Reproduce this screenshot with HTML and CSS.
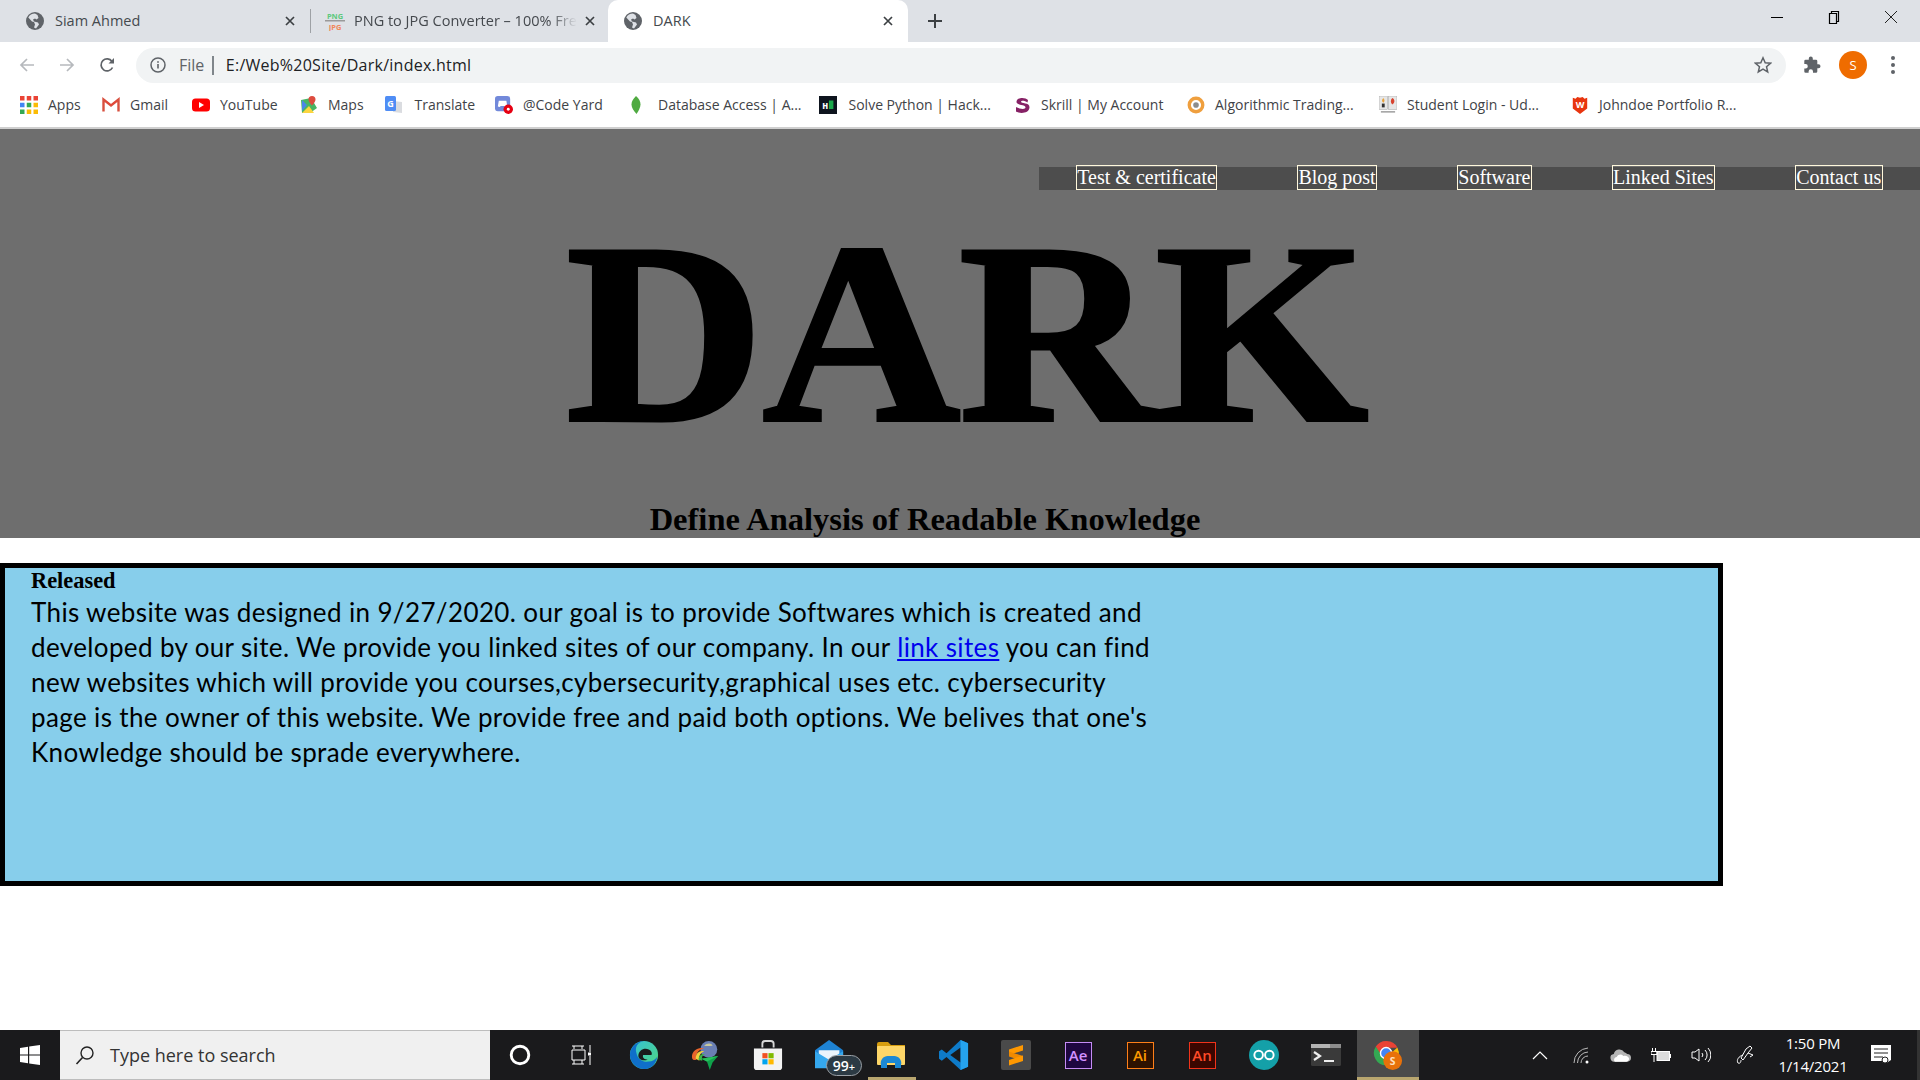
FILE: index.html
```html
<!DOCTYPE html>
<html lang="en">
<head>
<meta charset="utf-8">
<title>DARK</title>
<link rel="stylesheet" href="styles.css">
</head>
<body>
<svg class="defs" width="0" height="0"><defs>
<symbol id="globe" viewBox="0 0 18 18"><circle cx="9" cy="9" r="9" fill="#5f6368"/><path d="M9 1.5C6 1.5 3.500 3 2.300 5.500L6 9.500l2 .5 1 2.500-1 3 2 1 3-4-1-2-4-1-1-2 2-1 1.500 1 2-1.500-1-3z" fill="#dee1e6"/></symbol>
</defs></svg>
<div class="chrome">
  <div class="tabstrip">
    <div class="tab tab-a">
      <svg class="fav"><use href="#globe"/></svg>
      <span class="tab-title">Siam Ahmed</span>
      <svg class="close" viewBox="0 0 10 10"><path d="M1 1l8 8M9 1l-8 8"/></svg>
    </div>
    <div class="tab tab-b">
      <svg class="fav-png" viewBox="0 0 20 20"><text x="10" y="7.500" class="png">PNG</text><rect x="0" y="9" width="20" height="1.500" fill="#9a9a9a"/><text x="10" y="18.500" class="jpg">JPG</text></svg>
      <span class="tab-title fade">PNG to JPG Converter – 100% Free</span>
      <svg class="close" viewBox="0 0 10 10"><path d="M1 1l8 8M9 1l-8 8"/></svg>
    </div>
    <div class="tab tab-c">
      <svg class="fav"><use href="#globe"/></svg>
      <span class="tab-title">DARK</span>
      <svg class="close" viewBox="0 0 10 10"><path d="M1 1l8 8M9 1l-8 8"/></svg>
    </div>
    <svg class="newtab" viewBox="0 0 14 14"><path d="M7 0v14M0 7h14"/></svg>
    <div class="winctl">
      <svg viewBox="0 0 14 14"><path d="M1 7.500h12" stroke="#000"/></svg>
      <svg viewBox="0 0 14 14"><path d="M2.500 3.500h7v10h-7zM4.500 3.500V1.500h7v10h-2" fill="none" stroke="#000" stroke-width="1.200"/></svg>
      <svg viewBox="0 0 14 14"><path d="M1 1l12 12M13 1L1 13" stroke="#222"/></svg>
    </div>
  </div>
  <div class="toolbar">
    <svg class="nav-ic dim" viewBox="0 0 16 16"><path d="M15 8H2M8 2L2 8l6 6"/></svg>
    <svg class="nav-ic dim" viewBox="0 0 16 16"><path d="M1 8h13M8 2l6 6-6 6"/></svg>
    <svg class="nav-ic" viewBox="0 0 16 16"><path d="M13.500 10.500A6 6 0 1 1 13 4.500"/><path class="solid" d="M15 1v5.500H9.500z"/></svg>
    <div class="omni">
      <svg class="info" viewBox="0 0 16 16"><circle cx="8" cy="8" r="7" fill="none" stroke="#5f6368" stroke-width="1.500"/><rect x="7.200" y="7" width="1.600" height="4.500" fill="#5f6368"/><rect x="7.200" y="4.200" width="1.600" height="1.600" fill="#5f6368"/></svg>
      <span class="scheme">File</span>
      <span class="sep"></span>
      <span class="url">E:/Web%20Site/Dark/index.html</span>
      <svg class="star" viewBox="0 0 18 18"><path d="M9 1.800l2.200 4.900 5.300.5-4 3.500 1.200 5.200L9 13.200l-4.700 2.700 1.200-5.200-4-3.500 5.300-.5z"/></svg>
    </div>
    <svg class="puzzle" viewBox="0 0 18 18"><path fill="#5f6368" d="M15.500 8.200h-1.200V5a1.300 1.300 0 0 0-1.300-1.300H9.800V2.500a2 2 0 0 0-4 0v1.200H2.600A1.300 1.300 0 0 0 1.300 5v3h1.300a2.200 2.200 0 0 1 0 4.400H1.300v3a1.300 1.300 0 0 0 1.300 1.300h3v-1.300a2.200 2.200 0 0 1 4.400 0v1.300h3a1.300 1.300 0 0 0 1.300-1.300v-3.200h1.200a2 2 0 0 0 0-4z"/></svg>
    <span class="avatar">S</span>
    <span class="dots"><i></i><i></i><i></i></span>
  </div>
  <div class="bookmarks">
    <a class="bm"><svg class="bi" viewBox="0 0 16 16"><g><rect x="0" y="0" width="4" height="4" fill="#ea4335"/><rect x="6" y="0" width="4" height="4" fill="#ea4335"/><rect x="12" y="0" width="4" height="4" fill="#ea4335"/><rect x="0" y="6" width="4" height="4" fill="#4285f4"/><rect x="6" y="6" width="4" height="4" fill="#34a853"/><rect x="12" y="6" width="4" height="4" fill="#fbbc05"/><rect x="0" y="12" width="4" height="4" fill="#34a853"/><rect x="6" y="12" width="4" height="4" fill="#fbbc05"/><rect x="12" y="12" width="4" height="4" fill="#fbbc05"/></g></svg>Apps</a>
    <a class="bm"><svg class="bi" viewBox="0 0 18 16"><path d="M1.500 14.500V2.500L9 8.500l7.500-6v12" fill="none" stroke="#d8503f" stroke-width="2.400"/><path d="M3 3.500L9 8l6-4.500" fill="none" stroke="#ea4335" stroke-width="1"/></svg>Gmail</a>
    <a class="bm"><svg class="bi" viewBox="0 0 18 16"><rect x="0" y="1.500" width="18" height="13" rx="3.500" fill="#f00"/><path d="M7 5l5 3-5 3z" fill="#fff"/></svg>YouTube</a>
    <a class="bm"><svg class="bi" viewBox="0 0 18 18"><path d="M1 4l10-2 6 10-7 5-8 0z" fill="#48b564"/><path d="M2 17l7-7 5 7z" fill="#fcd53f"/><path d="M2 4l5 5-5 6z" fill="#4a86e8"/><path d="M12 0a3.500 3.500 0 0 1 3.500 3.500c0 2.500-3.500 6-3.500 6s-3.500-3.500-3.500-6A3.500 3.500 0 0 1 12 0z" fill="#dd4b3e"/></svg>Maps</a>
    <a class="bm bm-wide"><svg class="bi" viewBox="0 0 18 18"><path d="M8 5l9 1v11l-9-1z" fill="#dadce0"/><rect x="0" y="0" width="11" height="15" rx="1.500" fill="#4f8df5"/><text x="5.500" y="11" class="tg">G</text></svg>Translate</a>
    <a class="bm"><svg class="bi" viewBox="0 0 19 19"><rect x="0" y="0" width="16" height="16" rx="3" fill="#7289da"/><path d="M4 5h8l1 6-2 .5-1-1H6l-1 1-2-.5z" fill="#fff"/><circle cx="14" cy="14" r="5" fill="#e60012"/><circle cx="14" cy="14" r="1.500" fill="#fff"/></svg>@Code Yard</a>
    <a class="bm"><svg class="bi" viewBox="0 0 16 18"><path d="M5 0c3 2.500 4.500 5.500 4.500 8.500S7.500 15 5.500 18C3 15 .5 12 .5 8.500S2.500 2.500 5 0z" fill="#4faa41"/></svg>Database Access | A...</a>
    <a class="bm bm-wide"><svg class="bi" viewBox="0 0 20 20"><rect width="20" height="20" fill="#0e141e"/><text x="7" y="14" class="hr">H</text><rect x="11" y="5" width="5" height="9.500" fill="#1ba94c"/></svg>Solve Python | Hack...</a>
    <a class="bm"><svg class="bi" viewBox="0 0 15 18"><path d="M13.500 4C11 1 2.500 1 2 5.500c-.3 4.500 9.500 2.500 9 6 0 2-5 2-9.500-.5V15.500c4 2.500 13 2 13.500-4 .5-5.500-9-3.500-8.500-6 .5-1.500 4-1 6.500 1z" fill="#862165"/></svg>Skrill | My Account</a>
    <a class="bm"><svg class="bi" viewBox="0 0 16 16"><circle cx="8" cy="8" r="6" fill="none" stroke="#ef9f3e" stroke-width="3"/><circle cx="8" cy="8" r="2.500" fill="#8d8d8d"/></svg>Algorithmic Trading...</a>
    <a class="bm"><svg class="bi" viewBox="0 0 19 19"><rect x="0" y="0" width="9" height="14" fill="#e6e6e6" stroke="#999" stroke-width=".5"/><rect x="10" y="0" width="9" height="14" fill="#e6e6e6" stroke="#999" stroke-width=".5"/><path d="M4.500 2c2 2 1.500 4 0 5-1.500-1-2-3 0-5z" fill="#e9a23b"/><path d="M14 2c3 1.500 3 5 0 7-2-2-2-5 0-7z" fill="#d8432f"/><rect x="3" y="8" width="3" height="4" fill="#333"/><rect x="2" y="16" width="15" height="1.500" fill="#999"/></svg>Student Login - Ud...</a>
    <a class="bm"><svg class="bi" viewBox="0 0 18 20"><path d="M1 2l3 1 2-2 3 1 3-1 2 2 3-1v12l-8 6-8-6z" fill="#e8350f"/><text x="9" y="13.500" class="wm">W</text></svg>Johndoe Portfolio R...</a>
  </div>
</div>

<main class="page">
  <header class="hero">
    <nav class="topnav">
      <a class="navlink">Test &amp; certificate</a>
      <a class="navlink">Blog post</a>
      <a class="navlink">Software</a>
      <a class="navlink">Linked Sites</a>
      <a class="navlink">Contact us</a>
    </nav>
    <h1 class="title">DARK</h1>
    <h2 class="subtitle">Define Analysis of Readable Knowledge</h2>
  </header>
  <section class="released">
    <h3 class="rel-head">Released</h3>
    <p class="rel-text">This website was designed in 9/27/2020. our goal is to provide Softwares which is created and<br>developed by our site. We provide you linked sites of our company. In our <a class="inlink" href="#">link sites</a> you can find<br>new websites which will provide you courses,cybersecurity,graphical uses etc. cybersecurity<br>page is the owner of this website. We provide free and paid both options. We belives that one's<br>Knowledge should be sprade everywhere.</p>
  </section>
</main>

<footer class="taskbar">
  <div class="start"><svg viewBox="0 0 20 20"><path fill="#fff" d="M0 3l8-1.200V9.500H0zM9.200 1.600L20 0v9.500H9.200zM0 10.500h8v7.700L0 17zM9.200 10.500H20V20L9.200 18.400z"/></svg></div>
  <div class="search">
    <svg viewBox="0 0 20 20"><circle cx="12" cy="8" r="6" fill="none" stroke="#222" stroke-width="1.400"/><path d="M7.500 12.500L1.500 19" stroke="#222" stroke-width="1.600"/></svg>
    <span>Type here to search</span>
  </div>
  <div class="apps">
    <span class="slot"><svg class="ti" viewBox="0 0 20 20"><circle cx="10" cy="10" r="8" fill="none" stroke="#fff" stroke-width="2.600"/></svg></span>
    <span class="slot"><svg class="ti" viewBox="0 0 22 20"><path d="M1 1h12M1 19h12M3 1v3M11 1v3M1 5h13v10H1zM3 15v4M11 15v4M19 0v7M19 11v9" fill="none" stroke="#fff" stroke-width="1"/><rect x="17" y="7.500" width="3" height="3" fill="#fff"/></svg></span>
    <span class="slot"><svg class="ta" viewBox="0 0 32 32"><defs><linearGradient id="eg" x1="0" y1="0" x2="1" y2="1"><stop offset="0" stop-color="#35c1d8"/><stop offset="1" stop-color="#4fd67f"/></linearGradient></defs><circle cx="16" cy="16" r="15" fill="url(#eg)"/><path d="M1 16C1 8 8 1 16 1c-7 1-10 7-8 13 1 6 7 10 13 9 4-.5 7-2 9-5-1 8-7 13-14 13C8 31 1 24 1 16z" fill="#0f6fc9"/><path d="M10 17c0-6 6-9 11-7 3 1 4 4 3 6H15c-1 3 2 5 5 5-6 2-10-1-10-4z" fill="#1a1a1c"/></svg></span>
    <span class="slot"><svg class="ta" viewBox="0 0 32 32"><circle cx="19" cy="10" r="9" fill="#6a7fb3"/><path d="M14 6c3-3 8-3 9 0-3 0-6 1-9 0z" fill="#c8c89a"/><path d="M1 18c0-7 7-11 13-9-6 1-9 5-8 11 0 2-5 2-5-2z" fill="#e8642b"/><path d="M5 20c0-6 4-9 9-8-4 2-6 5-5 10z" fill="#f2d13d"/><path d="M8 21c0-4 3-7 7-6-3 1-4 4-3 7z" fill="#3bb54a"/><path d="M29 17L11 20l6 3 3 9 3-8z" fill="#0fa14a"/><path d="M29 17L11 20l6 3z" fill="#27c35d"/></svg></span>
    <span class="slot"><svg class="ta" viewBox="0 0 30 32"><path d="M9 8V4a3 3 0 0 1 3-3h6a3 3 0 0 1 3 3v4" fill="none" stroke="#d8d8d8" stroke-width="2"/><path d="M0 9h30v20a3 3 0 0 1-3 3H3a3 3 0 0 1-3-3z" fill="#f3f3f3"/><rect x="9" y="14" width="5.500" height="5.500" fill="#f25022"/><rect x="15.500" y="14" width="5.500" height="5.500" fill="#7fba00"/><rect x="9" y="20.500" width="5.500" height="5.500" fill="#00a4ef"/><rect x="15.500" y="20.500" width="5.500" height="5.500" fill="#ffb900"/></svg></span>
    <span class="slot mail"><svg class="ta" viewBox="0 0 32 32"><path d="M0 11L15 0l15 11v18H0z" fill="#1e83d4"/><path d="M4 11h22v5L15 22 4 16z" fill="#eaf4fc"/><path d="M0 12l15 9 15-9v18H0z" fill="#35a8ee"/></svg><span class="badge">99<small>+</small></span></span>
    <span class="slot running"><svg class="ta" viewBox="0 0 30 26"><path d="M2 0h9l3 3h14v4H0V2a2 2 0 0 1 2-2z" fill="#d69d0f"/><rect x="0" y="4" width="28" height="19" rx="1" fill="#fdd668"/><path d="M5 23a7 7 0 0 1 7-9h6a7 7 0 0 1 7 9v3h-6v-5h-8v5H5z" fill="#1b88d4" transform="translate(-1 0)"/></svg></span>
    <span class="slot"><svg class="ta" viewBox="0 0 32 32"><path d="M23 0l8 3.500v25L23 32 8 18l-5 4-3-2v-8l3-2 5 4z" fill="#0e7bc9"/><path d="M23 8L12 16l11 8z" fill="#1a1a1c"/><path d="M23 0l8 3.500v25L23 32z" fill="#25a3ee"/></svg></span>
    <span class="slot"><span class="sublime"><svg viewBox="0 0 20 24"><path d="M17 2v5.500L3 12V6.500z" fill="#ff9800"/><path d="M3 8.500l14 4.500v5L3 13.500z" fill="#f08a00"/><path d="M17 12.500V18L3 22.500V17z" fill="#ff9800"/></svg></span></span>
    <span class="slot"><span class="adobe ae">Ae</span></span>
    <span class="slot"><span class="adobe ai">Ai</span></span>
    <span class="slot"><span class="adobe an">An</span></span>
    <span class="slot"><svg class="ta" viewBox="0 0 28 28"><circle cx="14" cy="14" r="14" fill="#14a0a8"/><circle cx="9" cy="14" r="4" fill="none" stroke="#fff" stroke-width="1.800"/><circle cx="19" cy="14" r="4" fill="none" stroke="#fff" stroke-width="1.800"/></svg></span>
    <span class="slot"><svg class="term" viewBox="0 0 30 22"><rect width="30" height="22" rx="1.500" fill="#3a3a3a"/><rect width="30" height="4" fill="#b3b3b3"/><rect x="19" width="11" height="4" fill="#8c8c8c"/><path d="M3 8l6 4-6 4" fill="none" stroke="#eee" stroke-width="2.200"/><rect x="13" y="16" width="10" height="2" fill="#eee"/></svg></span>
    <span class="slot active"><svg class="ta" viewBox="0 0 32 32"><path d="M14 1A13 13 0 0 1 26 8H14z" fill="#ea4335"/><path d="M26 8a13 13 0 0 1-4 17l-5-9z" fill="#fbbc05"/><path d="M3 7A13 13 0 0 0 14 27l5-9-8-2z" fill="#34a853"/><path d="M14 1A13 13 0 0 0 3 7l6 9 2-8h15z" fill="#ea4335"/><circle cx="14" cy="14" r="6" fill="#4285f4" stroke="#fff" stroke-width="1.500"/><circle cx="21" cy="22" r="10" fill="#e8710a"/><text x="21" y="27" class="cs">S</text></svg></span>
  </div>
  <div class="tray">
    <svg class="tr tr-chev" viewBox="0 0 16 10"><path d="M1 9l7-7 7 7" fill="none" stroke="#fff" stroke-width="1.200"/></svg>
    <svg class="tr tr-wifi" viewBox="0 0 18 18"><path d="M1 17A15 15 0 0 1 15 2M4.500 17A11 11 0 0 1 15 6M8 17a7 7 0 0 1 7-7" fill="none" stroke="#bbb" stroke-width="1"/><circle cx="14" cy="16" r="1.500" fill="#fff"/></svg>
    <svg class="tr tr-cloud" viewBox="0 0 22 14"><path d="M5 14a4 4 0 0 1-1-8 6 6 0 0 1 11-2 4.500 4.500 0 0 1 3 2 4 4 0 0 1 0 8z" fill="#b5b5b5"/><path d="M5 14a3 3 0 0 1 2-5c2-3 5-3 7-1 3-1 6 1 6 3s-2 3-3 3z" fill="#fff"/></svg>
    <svg class="tr tr-batt" viewBox="0 0 20 14"><rect x="6" y="3.500" width="12.500" height="9" fill="#ddd" stroke="#fff"/><rect x="19" y="6" width="1" height="4" fill="#fff"/><path d="M1.500 0v3M4.500 0v3M0 3.500h6v3H0zM3 6.500v7.500" fill="none" stroke="#fff" stroke-width="1"/></svg>
    <svg class="tr tr-vol" viewBox="0 0 20 16"><path d="M1 5h3l4-3v12l-4-3H1z" fill="none" stroke="#fff"/><path d="M11 6a3 3 0 0 1 0 4M14 3a7 7 0 0 1 0 10M17 1a10 10 0 0 1 0 14" fill="none" stroke="#fff"/></svg>
    <svg class="tr tr-pen" viewBox="0 0 20 20"><path d="M10 4l4-3 2 2-4 5-5 7-2-2zM7 10C3 11 0 15 2 18c2 1 3-1 3-3M12 8l5 2-3 2" fill="none" stroke="#fff" stroke-width="1"/></svg>
    <div class="clock"><span>1:50 PM</span><span>1/14/2021</span></div>
    <svg class="tr tr-note" viewBox="0 0 20 20"><path d="M0 0h20v15l-3 2-3 1-2-2H0z" fill="#fff"/><path d="M3 4h14M3 8h14M3 12h9" stroke="#222"/><circle cx="14" cy="15" r="3" fill="#fff" stroke="#222"/></svg>
  </div>
</footer>
</body>
</html>
```

FILE: styles.css
```css
* { box-sizing: border-box; }
html, body { margin: 0; padding: 0; }
body {
  width: 1920px;
  height: 1080px;
  overflow: hidden;
  display: flex;
  flex-direction: column;
  background: #fff;
  font-family: "Open Sans", "Noto Sans", sans-serif;
}
.defs { position: absolute; }

/* browser chrome */
.chrome { height: 129px; flex: none; border-bottom: 2px solid #cfcfcf; }
.tabstrip { height: 42px; background: #dee1e6; display: flex; align-items: center; }
.tab { height: 42px; display: flex; align-items: center; color: #45494e; }
.tab-a { width: 310px; padding: 0 15px 0 26px; }
.tab-b { width: 298px; padding: 0 13px 0 14px; border-left: 1px solid #9ea1a5; height: 24px; }
.tab-c { width: 300px; padding: 0 15px 0 16px; background: #fff; border-radius: 10px 10px 0 0; }
.fav { width: 18px; height: 18px; flex: none; margin-right: 11px; }
.fav-png { width: 20px; height: 20px; flex: none; margin-right: 9px; }
.png, .jpg { font: bold 7.500px "Open Sans", sans-serif; text-anchor: middle; }
.png { fill: #5cc97d; }
.jpg { fill: #f0875a; }
.tab-title { flex: 1; min-width: 0; white-space: nowrap; overflow: hidden; font-size: 14.500px; margin-top: -1px; }
.fade { -webkit-mask-image: linear-gradient(to right, #000 88%, transparent 100%); mask-image: linear-gradient(to right, #000 88%, transparent 100%); }
.close { width: 10px; height: 10px; flex: none; margin-left: 8px; }
.close path { stroke: #3c4043; stroke-width: 1.700; fill: none; }
.newtab { width: 14px; height: 14px; margin-left: 20px; flex: none; }
.newtab path { stroke: #3c4043; stroke-width: 2; fill: none; }
.winctl { margin-left: auto; display: flex; gap: 43px; padding-right: 22px; margin-top: -8px; }
.winctl svg { width: 14px; height: 14px; fill: none; }

.toolbar { height: 46px; background: #fff; display: flex; align-items: center; padding: 0 20px 0 19px; }
.nav-ic { width: 16px; height: 16px; flex: none; margin-right: 24px; fill: none; stroke: #5f6368; stroke-width: 1.700; }
.nav-ic.dim { stroke: #b6b9bd; }
.nav-ic .solid { fill: #5f6368; stroke: none; }
.omni { width: 1650px; height: 35px; margin-left: -3px; background: #f1f3f4; border-radius: 18px; display: flex; align-items: center; padding: 0 14px; font-size: 16px; flex: none; }
.info { width: 16px; height: 16px; flex: none; margin-right: 13px; }
.scheme { color: #5f6368; }
.sep { width: 1.500px; height: 19px; background: #80868b; margin: 0 12px 0 8px; }
.url { color: #202124; letter-spacing: .25px; }
.star { width: 18px; height: 18px; margin-left: auto; fill: none; stroke: #5f6368; stroke-width: 1.500; }
.puzzle { width: 18px; height: 18px; flex: none; margin-left: 17px; }
.avatar { width: 28px; height: 28px; flex: none; margin-left: 18px; border-radius: 50%; background: #ef6c00; color: #fff; font-size: 13px; display: flex; align-items: center; justify-content: center; }
.dots { display: flex; flex-direction: column; gap: 3px; margin-left: 24px; flex: none; }
.dots i { width: 4px; height: 4px; border-radius: 50%; background: #5f6368; }

.bookmarks {
  height: 39px;
  padding: 0 0 6px 20px;
  display: grid;
  grid-template-columns: 82px 90px 108px 85px 110px 135px 189px 194px 174px 192px 192px 200px;
  align-items: center;
  font-size: 14px;
  color: #3f4347;
}
.bm { display: flex; align-items: center; white-space: nowrap; }
.bi { width: 18px; height: 18px; flex: none; margin-right: 10px; }
.bm-wide .bi { margin-right: 11.500px; }
.tg { font: bold 9px "Open Sans", sans-serif; fill: #fff; text-anchor: middle; }
.hr { font: bold 11px "Liberation Mono", monospace; fill: #fff; text-anchor: middle; }
.wm { font: bold 10px "Open Sans", sans-serif; fill: #fff; text-anchor: middle; }

/* page */
.page { flex: 1; min-height: 0; }
.hero { background: #6e6e6e; height: 409px; padding-top: 38px; font-family: "Liberation Serif", serif; overflow: hidden; }
.topnav {
  margin-left: 1039px;
  height: 23px;
  background: #4d4d4d;
  display: flex;
  gap: 80px;
  padding-left: 37px;
  font-size: 20px;
}
.navlink { color: #fff; border: 1px solid #fff8dc; height: 25px; margin-top: -2px; line-height: 23px; white-space: nowrap; padding: 0 .3px; }
.title {
  margin: 2px 0 0;
  padding-left: 13px;
  text-align: center;
  font-size: 274px;
  line-height: 272px;
  letter-spacing: -1.500px;
  font-weight: bold;
  color: #000;
  -webkit-text-stroke: 4px #000;
  transform: scaleY(.94);
  transform-origin: 50% 228px;
}
.subtitle { margin: 37px 0 0; padding-right: 70px; text-align: center; font-size: 32.500px; line-height: 37px; font-weight: bold; color: #000; }

.released {
  width: 1723px;
  height: 323px;
  margin-top: 25px;
  border: 5px solid #000;
  background: #87ceeb;
  padding: 0 0 0 26px;
}
.rel-head { margin: 0; font: bold 22.400px/25px "Liberation Serif", serif; color: #000; }
.rel-text { margin: 2px 0 0; font-family: "Lato", "Open Sans", sans-serif; font-size: 26px; line-height: 35px; color: #000; white-space: nowrap; letter-spacing: .37px; }
.inlink { color: #0000ee; text-decoration: underline; }

/* taskbar */
.taskbar { height: 50px; flex: none; background: #1a1a1c; display: flex; align-items: stretch; color: #fff; }
.start { width: 60px; display: flex; align-items: center; justify-content: center; }
.start svg { width: 20px; height: 20px; }
.search { width: 430px; background: #f0f0f0; border-top: 1px solid #bdbdbd; border-bottom: 1px solid #bdbdbd; display: flex; align-items: center; padding-left: 15px; color: #333; font-size: 18px; }
.search svg { width: 20px; height: 20px; margin-right: 15px; flex: none; }
.apps { display: flex; margin-left: -1px; }
.slot { width: 62px; display: flex; align-items: center; justify-content: center; position: relative; }
.ti { width: 22px; height: 22px; }
.ta { width: 30px; height: 30px; }
.term { width: 30px; height: 22px; }
.running::after { content: ""; position: absolute; left: 7px; right: 7px; bottom: 0; height: 3px; background: #b9a66f; }
.active { background: #4b4b4b; }
.active::after { content: ""; position: absolute; left: 0; right: 0; bottom: 0; height: 3px; background: #b9a66f; }
.cs { font: bold 11px "Open Sans", sans-serif; fill: #ffe0c0; text-anchor: middle; }
.badge { position: absolute; left: 27px; top: 25px; width: 36px; height: 21px; border-radius: 11px; background: #2c3a44; border: 1px solid #9aa0a6; font-size: 14px; font-weight: 600; line-height: 19px; text-align: center; color: #fff; }
.badge small { font-size: 11px; }
.sublime { width: 30px; height: 30px; border-radius: 2px; background: #4a4a4a; display: flex; align-items: center; justify-content: center; }
.sublime svg { width: 20px; height: 24px; }
.adobe { width: 27px; height: 27px; border: 1.500px solid; font-size: 15px; font-weight: 600; display: flex; align-items: center; justify-content: center; }
.ae { color: #d291ff; border-color: #c58cf5; background: #1f0740; }
.ai { color: #ff9a00; border-color: #ff7f18; background: #2e1200; }
.an { color: #ff4a28; border-color: #f0331a; background: #3a0600; }
.tray { margin-left: auto; display: flex; align-items: center; width: 420px; padding-left: 32px; border-right: 3px solid #333; }
.tr { flex: none; }
.tr-chev { width: 16px; height: 10px; margin-right: 25px; }
.tr-wifi { width: 18px; height: 18px; margin-right: 19px; }
.tr-cloud { width: 21px; height: 14px; margin-right: 20px; }
.tr-batt { width: 20px; height: 14px; margin-right: 20px; }
.tr-vol { width: 20px; height: 16px; margin-right: 25px; }
.tr-pen { width: 20px; height: 20px; margin-right: 21px; }
.clock { display: flex; flex-direction: column; align-items: center; width: 72px; gap: 4px; line-height: 19px; font-size: 15px; color: #fff; letter-spacing: -.2px; }
.tr-note { width: 20px; height: 20px; margin-left: 22px; }
```
